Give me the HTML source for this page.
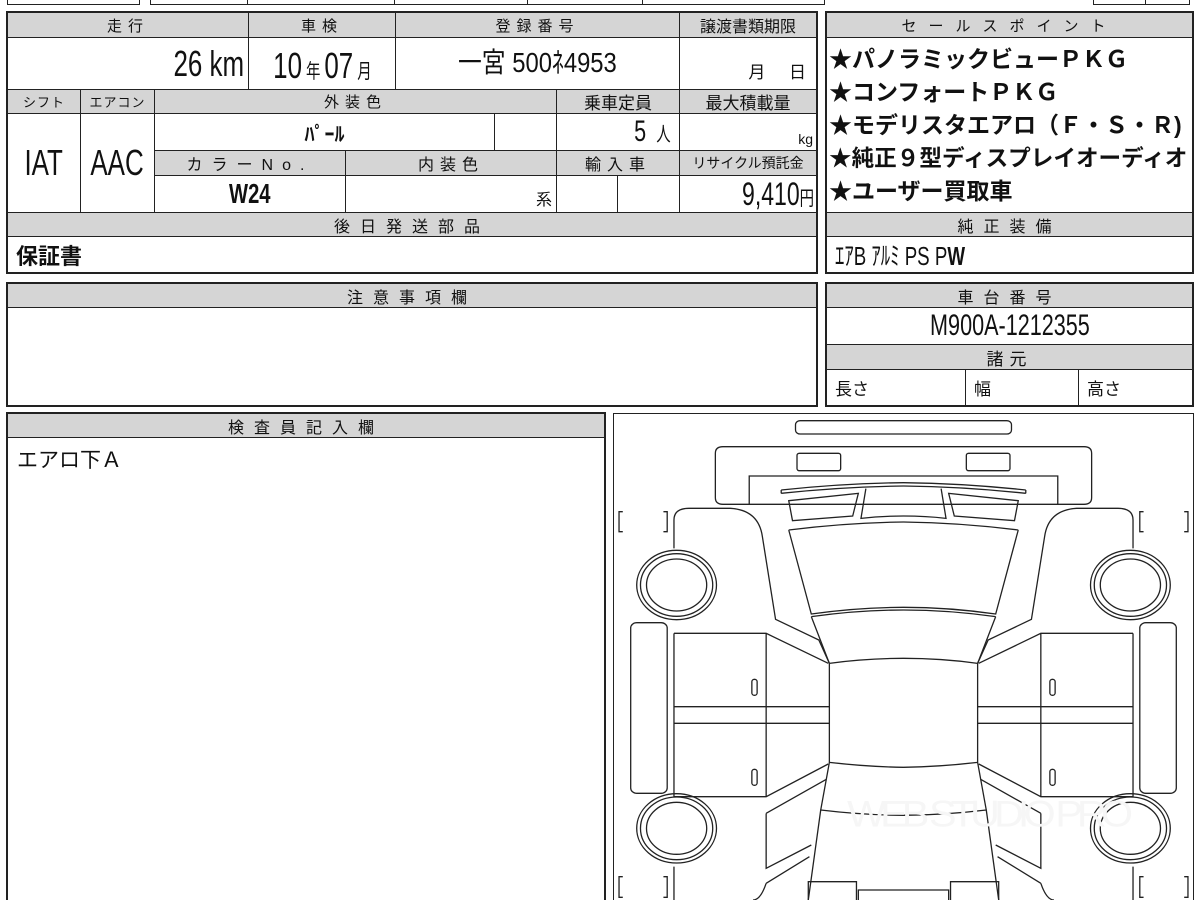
<!DOCTYPE html>
<html style="height:900px;overflow:hidden"><head><meta charset="utf-8"><style>
html,body{margin:0;width:1200px;height:900px;overflow:hidden}
body{background:#fff;position:relative;font-family:"Liberation Sans","Noto Sans CJK JP",sans-serif;color:#111}
.c{position:absolute;box-sizing:border-box;border:1px solid #222;display:flex;align-items:center;justify-content:center;white-space:nowrap;overflow:hidden}
.h{background:#d5d5d5;font-size:15px;letter-spacing:6px}
.b{position:absolute;box-sizing:border-box;border:2px solid #222}
.n{display:inline-block;transform:scaleX(.72)}
</style></head><body>

<div class="c" style="left:7px;top:-6px;width:133px;height:11px"></div>
<div class="c" style="left:150px;top:-6px;width:98px;height:11px"></div>
<div class="c" style="left:247px;top:-6px;width:148px;height:11px"></div>
<div class="c" style="left:394px;top:-6px;width:134px;height:11px"></div>
<div class="c" style="left:527px;top:-6px;width:116px;height:11px"></div>
<div class="c" style="left:642px;top:-6px;width:183px;height:11px"></div>
<div class="c" style="left:1093px;top:-6px;width:53px;height:11px"></div>
<div class="c" style="left:1145px;top:-6px;width:45px;height:11px"></div>

<div class="c h" style="left:7px;top:12px;width:242px;height:26px">走行</div>
<div class="c h" style="left:248px;top:12px;width:148px;height:26px">車検</div>
<div class="c h" style="left:395px;top:12px;width:285px;height:26px">登録番号</div>
<div class="c h" style="left:679px;top:12px;width:138px;height:26px;letter-spacing:0;font-size:16px">譲渡書類期限</div>

<div class="c" style="left:7px;top:37px;width:242px;height:53px;justify-content:flex-end;padding-right:4px;font-size:36px;"><span class="n" style="transform-origin:right">26 km</span></div>
<div class="c" style="left:248px;top:37px;width:148px;height:53px;font-size:36px;padding-top:4px"><span class="n">10<span style="font-size:20px"> 年 </span>07<span style="font-size:20px"> 月</span></span></div>
<div class="c" style="left:395px;top:37px;width:285px;height:53px;font-size:28px;padding-bottom:6px"><span style="display:inline-block;transform:scaleX(.85)">一宮 500ﾈ4953</span></div>
<div class="c" style="left:679px;top:37px;width:138px;height:53px;font-size:17px;align-items:flex-end;padding-bottom:6px;justify-content:flex-end;padding-right:10px">月&nbsp;&nbsp;&nbsp;&nbsp;&nbsp;日</div>

<div class="c h" style="left:7px;top:89px;width:74px;height:25px;letter-spacing:1px;font-size:13px">シフト</div>
<div class="c h" style="left:80px;top:89px;width:75px;height:25px;letter-spacing:1px;font-size:13px">エアコン</div>
<div class="c h" style="left:154px;top:89px;width:403px;height:25px">外装色</div>
<div class="c h" style="left:556px;top:89px;width:124px;height:25px;letter-spacing:0;font-size:17px">乗車定員</div>
<div class="c h" style="left:679px;top:89px;width:138px;height:25px;letter-spacing:0;font-size:17px">最大積載量</div>

<div class="c" style="left:7px;top:113px;width:74px;height:100px;font-size:36px"><span class="n">IAT</span></div>
<div class="c" style="left:80px;top:113px;width:75px;height:100px;font-size:36px"><span class="n">AAC</span></div>
<div class="c" style="left:154px;top:113px;width:341px;height:38px;font-size:20px;font-weight:bold">ﾊﾟｰﾙ</div>
<div class="c" style="left:494px;top:113px;width:63px;height:38px"></div>
<div class="c" style="left:556px;top:113px;width:124px;height:38px;font-size:30px;justify-content:flex-end;padding-right:8px"><span class="n" style="transform-origin:right">5 <span style="font-size:20px">&nbsp;人</span></span></div>
<div class="c" style="left:679px;top:113px;width:138px;height:38px;font-size:14px;justify-content:flex-end;align-items:flex-end;padding:0 3px 3px 0">kg</div>

<div class="c h" style="left:154px;top:150px;width:192px;height:26px;letter-spacing:9px;font-size:16px">カラーNo.</div>
<div class="c h" style="left:345px;top:150px;width:212px;height:26px;font-size:16px">内装色</div>
<div class="c h" style="left:556px;top:150px;width:124px;height:26px;font-size:16px">輸入車</div>
<div class="c h" style="left:679px;top:150px;width:138px;height:26px;letter-spacing:0;font-size:14px">リサイクル預託金</div>

<div class="c" style="left:154px;top:175px;width:192px;height:38px;font-size:28px;font-weight:bold"><span class="n">W24</span></div>
<div class="c" style="left:345px;top:175px;width:212px;height:38px;font-size:16px;justify-content:flex-end;align-items:flex-end;padding:0 4px 2px 0">系</div>
<div class="c" style="left:556px;top:175px;width:62px;height:38px"></div>
<div class="c" style="left:617px;top:175px;width:63px;height:38px"></div>
<div class="c" style="left:679px;top:175px;width:138px;height:38px;font-size:32px;justify-content:flex-end;padding-right:2px"><span class="n" style="transform-origin:right">9,410<span style="font-size:20px">円</span></span></div>

<div class="c h" style="left:7px;top:212px;width:810px;height:25px;letter-spacing:10px;font-size:16px">後日発送部品</div>
<div class="c" style="left:7px;top:236px;width:810px;height:37px;justify-content:flex-start;padding-left:8px;font-size:22px;font-weight:bold">保証書</div>
<div class="b" style="left:6px;top:11px;width:812px;height:263px"></div>

<div class="c h" style="left:826px;top:12px;width:367px;height:26px;letter-spacing:12px">セールスポイント</div>
<div class="c" style="left:826px;top:37px;width:367px;height:176px;display:block;padding:5px 0 0 2px;font-size:23px;font-weight:bold;line-height:33px">★パノラミックビューＰＫＧ<br>★コンフォートＰＫＧ<br>★モデリスタエアロ（Ｆ・Ｓ・Ｒ)<br><span style="font-size:22.6px">★純正９型ディスプレイオーディオ</span><br>★ユーザー買取車</div>
<div class="c h" style="left:826px;top:212px;width:367px;height:25px;letter-spacing:10px;font-size:16px">純正装備</div>
<div class="c" style="left:826px;top:236px;width:367px;height:37px;justify-content:flex-start;padding-left:8px;font-size:26px"><span class="n" style="transform-origin:left">ｴｱB ｱﾙﾐ PS P<b>W</b></span></div>
<div class="b" style="left:825px;top:11px;width:369px;height:263px"></div>

<div class="c h" style="left:7px;top:283px;width:810px;height:25px;letter-spacing:10px;font-size:16px">注意事項欄</div>
<div class="c" style="left:7px;top:307px;width:810px;height:99px"></div>
<div class="b" style="left:6px;top:282px;width:812px;height:125px"></div>

<div class="c h" style="left:826px;top:283px;width:367px;height:25px;letter-spacing:10px;font-size:16px">車台番号</div>
<div class="c" style="left:826px;top:307px;width:367px;height:38px;font-size:30px"><span class="n">M900A-1212355</span></div>
<div class="c h" style="left:826px;top:344px;width:367px;height:26px;letter-spacing:6px;font-size:17px">諸元</div>
<div class="c" style="left:826px;top:369px;width:140px;height:37px;justify-content:flex-start;padding-left:8px;font-size:17px">長さ</div>
<div class="c" style="left:965px;top:369px;width:114px;height:37px;justify-content:flex-start;padding-left:8px;font-size:17px">幅</div>
<div class="c" style="left:1078px;top:369px;width:115px;height:37px;justify-content:flex-start;padding-left:8px;font-size:17px">高さ</div>
<div class="b" style="left:825px;top:282px;width:369px;height:125px"></div>

<div class="c h" style="left:7px;top:413px;width:598px;height:25px;letter-spacing:10px;font-size:16px">検査員記入欄</div>
<div class="c" style="left:7px;top:437px;width:598px;height:470px;display:block;padding:6px 0 0 9px;font-size:21px">エアロ下Ａ</div>
<div class="b" style="left:6px;top:412px;width:600px;height:495px"></div>

<div class="b" style="left:613px;top:413px;width:581px;height:495px;border-width:1.5px"></div>
<svg style="position:absolute;left:610px;top:410px" width="590" height="490" viewBox="0 0 1568 1470" preserveAspectRatio="none">
<defs><g id="half" fill="none" stroke="#222" stroke-width="1.3">
<path vector-effect="non-scaling-stroke" d="M780,283 L370,283 L300,283 Q280,283 280,263 L280,130 Q280,110 300,110 L780,110 M370,283 L370,198 L780,198"/>
<rect vector-effect="non-scaling-stroke" x="497" y="130" width="116" height="52" rx="6"/>
<path vector-effect="non-scaling-stroke" d="M455,240 Q620,220 780,218 M455,250 Q620,230 780,228 M455,240 L455,250"/>
<path vector-effect="non-scaling-stroke" d="M475,272 L660,250 L645,318 L485,332 Z"/>
<path vector-effect="non-scaling-stroke" d="M680,236 L667,325 Q720,318 780,318"/>
<path vector-effect="non-scaling-stroke" d="M475,360 Q630,338 780,336 M475,360 L535,612 Q660,592 780,592 M535,620 Q660,600 780,600 M535,620 L583,760 Q680,745 780,745 M583,760 L583,1057 Q680,1070 780,1072 M583,1057 L560,1200 Q670,1215 780,1216 M560,1200 L527,1470"/>
<path vector-effect="non-scaling-stroke" d="M527,1470 L527,1415 L655,1415 L655,1470 M660,1470 L660,1440 L780,1440"/>
<path vector-effect="non-scaling-stroke" d="M170,415 L170,330 Q170,295 210,295 L320,295 Q395,300 405,380 L440,628 L555,690 L583,760"/>
<path vector-effect="non-scaling-stroke" d="M580,760 L415,670 L170,670 M415,670 L415,1160 M170,890 L583,890 M170,940 L583,940 M170,670 L170,1160 L415,1160 L580,1062"/>
<path vector-effect="non-scaling-stroke" d="M415,1210 L575,1108 M415,1210 L415,1375 L535,1305 M415,1420 L530,1340 M415,1420 Q400,1470 380,1470 M170,1370 L170,1470"/>
<rect vector-effect="non-scaling-stroke" x="55" y="638" width="97" height="512" rx="16"/>
<ellipse vector-effect="non-scaling-stroke" cx="177" cy="525" rx="106" ry="104"/>
<ellipse vector-effect="non-scaling-stroke" cx="177" cy="525" rx="96" ry="94"/>
<ellipse vector-effect="non-scaling-stroke" cx="177" cy="525" rx="80" ry="78"/>
<ellipse vector-effect="non-scaling-stroke" cx="177" cy="1255" rx="106" ry="104"/>
<ellipse vector-effect="non-scaling-stroke" cx="177" cy="1255" rx="96" ry="94"/>
<ellipse vector-effect="non-scaling-stroke" cx="177" cy="1255" rx="80" ry="78"/>
<path vector-effect="non-scaling-stroke" d="M34,305 L24,305 L24,365 L34,365 M142,305 L152,305 L152,365 L142,365 M34,1400 L24,1400 L24,1462 L34,1462 M142,1400 L152,1400 L152,1462 L142,1462"/>
<rect vector-effect="non-scaling-stroke" x="377" y="808" width="14" height="48" rx="7"/>
<rect vector-effect="non-scaling-stroke" x="377" y="1078" width="14" height="48" rx="7"/>
</g></defs>
<rect x="493" y="32" width="574" height="40" rx="12" fill="none" stroke="#222" stroke-width="1.3" vector-effect="non-scaling-stroke"/>
<use href="#half"/>
<use href="#half" transform="translate(1560,0) scale(-1,1)"/>
<text x="630" y="1250" font-size="110" fill="#f6f6f6" font-family="Liberation Sans, sans-serif" textLength="760">WEB STUDIO PRO</text>
</svg>
</body></html>
